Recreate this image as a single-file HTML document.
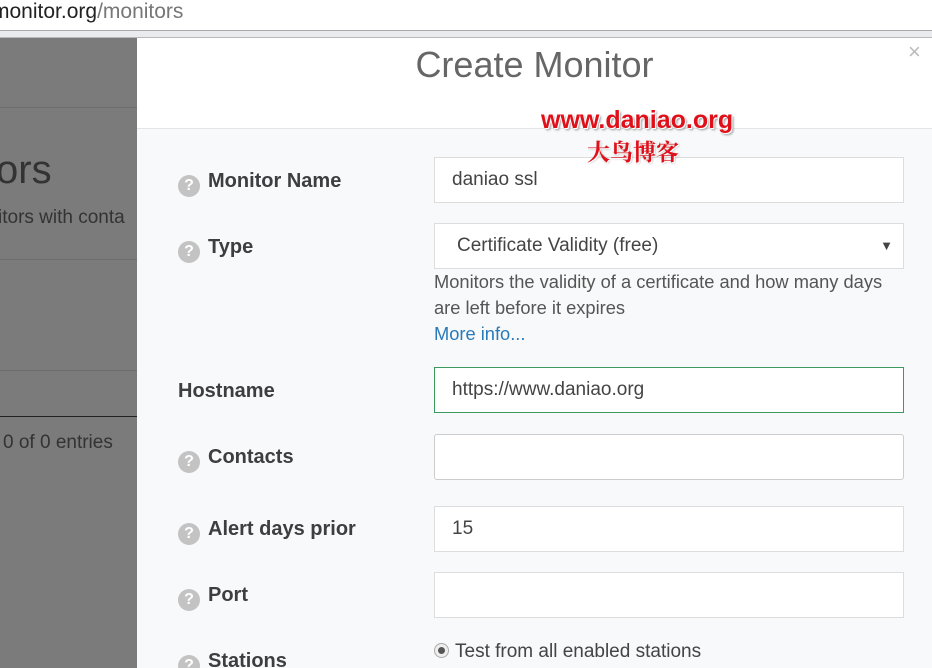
<!DOCTYPE html>
<html><head><meta charset="utf-8"><style>
*{margin:0;padding:0;box-sizing:border-box}
html,body{width:932px;height:668px;overflow:hidden}
body{position:relative;background:#7b7b7b;font-family:"Liberation Sans","DejaVu Sans",sans-serif}
.a{position:absolute}
.top{left:0;top:0;width:932px;height:31px;background:#fff;font-size:21px;color:#222;line-height:24px;border-bottom:1px solid #aaa;white-space:nowrap;overflow:hidden}
.bar{left:0;top:31px;width:932px;height:7px;background:#e9ebee;border-bottom:1px solid #b8b8b8}
.hl{left:0;width:137px;height:1px;background:#6e6e6e}
.modal{left:137px;top:38px;width:795px;height:630px;background:#f8f9fa;overflow:hidden}
.mh{left:0;top:0;width:795px;height:91px;background:#fff;border-bottom:1px solid #e4e5e6}
.lbl{left:41px;font-size:20px;font-weight:bold;color:#3c3e41;line-height:24px}
.q{display:inline-block;width:22px;height:22px;border-radius:50%;background:#c3c3c3;color:#fff;font-size:16px;text-align:center;line-height:22px;margin-right:8px;vertical-align:-3px}
.inp{left:297px;width:470px;height:46px;background:#fff;border:1px solid #ddd;font-size:19px;color:#444;line-height:44px;padding-left:17px}
.help{left:297px;font-size:18.3px;color:#555;line-height:26px}
</style></head><body>
<div class="a top"><span style="position:relative;left:-8px">monitor.org<span style="color:#777">/monitors</span></span></div>
<div class="a bar"></div>
<div class="a hl" style="top:107px"></div>
<div class="a" style="left:-4px;top:148px;font-size:40px;color:#333">ors</div>
<div class="a" style="left:-2px;top:207px;font-size:19px;color:#333">itors with conta</div>
<div class="a hl" style="top:259px"></div>
<div class="a hl" style="top:370px"></div>
<div class="a hl" style="top:416px;background:#222"></div>
<div class="a" style="left:3px;top:432px;font-size:19px;color:#333">0 of 0 entries</div>
<div class="a modal">
<div class="a mh"></div>
<div class="a" style="left:0;width:795px;top:6px;text-align:center;font-size:36px;color:#666">Create Monitor</div>
<div class="a" style="left:771px;top:1px;font-size:22px;color:#bbb">×</div>
<div class="a lbl" style="top:131px"><span class="q">?</span>Monitor Name</div>
<div class="a inp" style="top:119px">daniao ssl</div>
<div class="a lbl" style="top:197px"><span class="q">?</span>Type</div>
<div class="a inp" style="top:185px;padding-left:22px">Certificate Validity (free)<span style="position:absolute;right:10px;font-size:13px">▼</span></div>
<div class="a help" style="top:231px">Monitors the validity of a certificate and how many days<br>are left before it expires<br><span style="color:#2a7ab8">More info...</span></div>
<div class="a lbl" style="top:341px">Hostname</div>
<div class="a inp" style="top:329px;border-color:#3c9a5f">https://www.daniao.org</div>
<div class="a lbl" style="top:407px"><span class="q">?</span>Contacts</div>
<div class="a inp" style="top:396px;border-color:#ccc;border-radius:3px"></div>
<div class="a lbl" style="top:479px"><span class="q">?</span>Alert days prior</div>
<div class="a inp" style="top:468px">15</div>
<div class="a lbl" style="top:545px"><span class="q">?</span>Port</div>
<div class="a inp" style="top:534px"></div>
<div class="a lbl" style="top:611px"><span class="q">?</span>Stations</div>
<div class="a" style="left:297px;top:603px;font-size:19px;color:#444"><span style="display:inline-block;width:15px;height:15px;border-radius:50%;border:1px solid #aaa;background:radial-gradient(#555 35%,#eee 40%);vertical-align:-1px;margin-right:6px"></span>Test from all enabled stations</div>
<div class="a" style="z-index:5;left:404px;top:68px;font-size:25px;font-weight:bold;color:#e0101a;text-shadow:1px 1px 0 #fff,-1px -1px 0 #fff,2px 2px 2px #999">www.daniao.org</div>
<div class="a" style="z-index:5;left:450px;top:98px;font-size:23px;font-weight:bold;color:#e0101a;font-family:'Noto Serif CJK SC',serif;text-shadow:1px 1px 0 #fff,1px 1px 2px #999;line-height:30px">大鸟博客</div>
</div>
</body></html>
